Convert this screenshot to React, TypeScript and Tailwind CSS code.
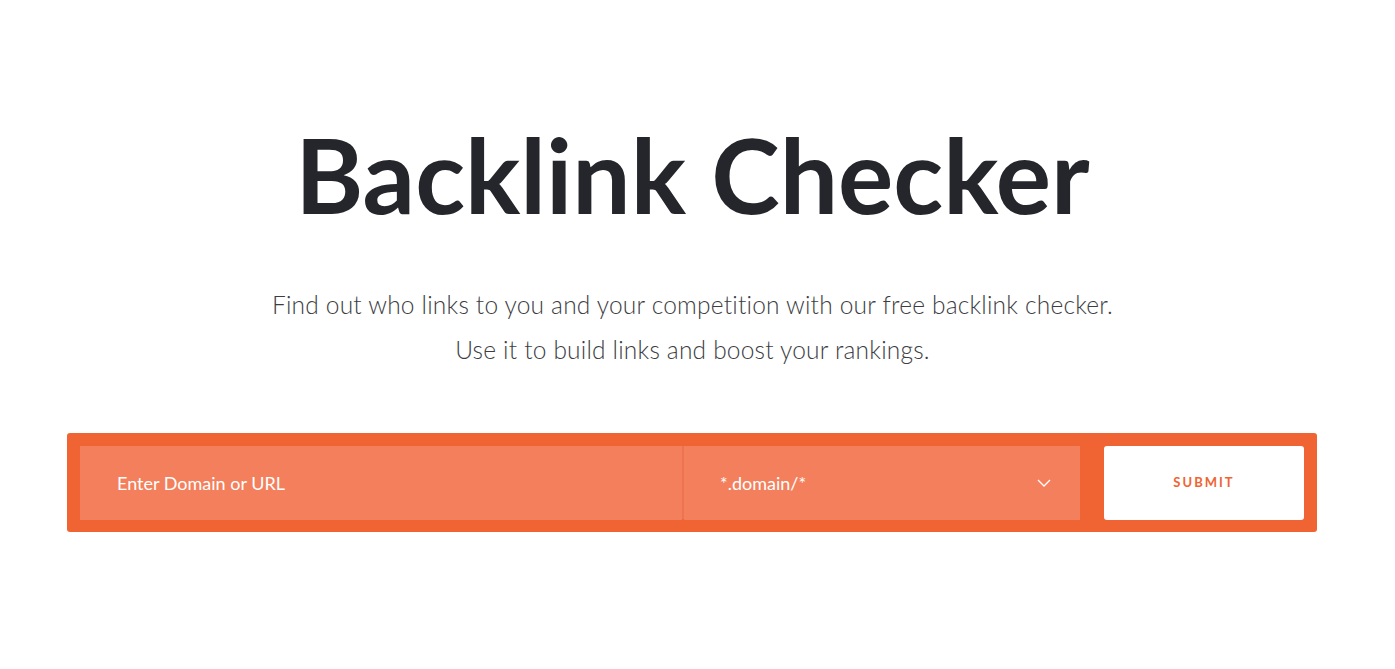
import React from "react";

export default function App() {
  return (
    <div className="w-[1395px] h-[669px] bg-white overflow-hidden" style={{ fontFamily: "Lato, 'Noto Sans', sans-serif" }}>
      <div className="flex flex-col items-center pr-[10px]">
        <h1 className="mt-[114px] text-[103.5px] leading-[120px] font-bold text-[#25262b]" style={{ fontFamily: "Lato, sans-serif" }}>
          Backlink Checker
        </h1>
        <div className="mt-[48px] flex flex-col items-center text-[24.5px] leading-[45px] font-light text-[#3c3d42] tracking-[0.2px]">
          <p>Find out who links to you and your competition with our free backlink checker.</p>
          <p>Use it to build links and boost your rankings.</p>
        </div>
      </div>
      <div className="mt-[61px] ml-[67px] w-[1250px] h-[99px] bg-[#ef6432] rounded-[3px] p-[13px] flex">
        <div className="w-[602px] h-[74px] bg-[#f47f5c] flex items-center pl-[37px] text-[18px] text-white">
          Enter Domain or URL
        </div>
        <div className="w-[2px] bg-[#ee7450]" />
        <div className="w-[396px] h-[74px] bg-[#f47f5c] flex items-center justify-between pl-[36px] pr-[29px] text-[18px] text-white">
          <span>*.domain/*</span>
          <svg width="14" height="8" viewBox="0 0 14 8" fill="none" stroke="white" strokeWidth="1.3">
            <path d="M1 1l6 6 6-6" />
          </svg>
        </div>
        <button className="ml-[24px] w-[200px] h-[74px] bg-white rounded-[3px] text-[#ef6432] text-[13px] font-bold tracking-[2px]">
          SUBMIT
        </button>
      </div>
    </div>
  );
}
